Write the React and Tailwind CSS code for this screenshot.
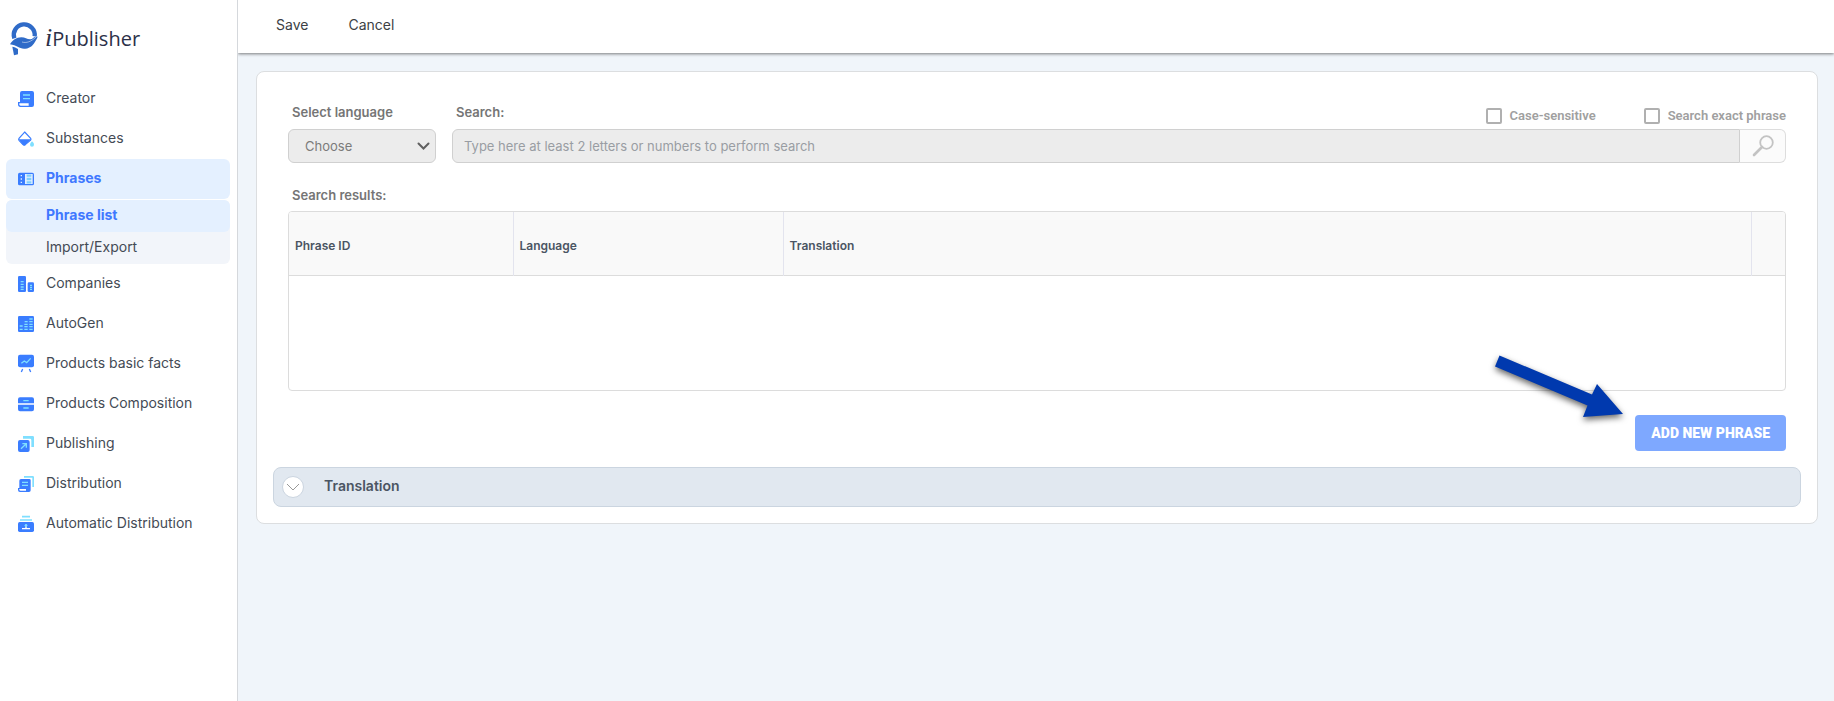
import React from 'react';

function Logo() {
  return (
    <svg width="28" height="35" viewBox="30 62 84 105" aria-hidden="true">
      <path d="M43 114A31.500 31.500 0 1 1 104 108" fill="none" stroke="#2f6bc8" strokeWidth="13" />
      <path
        d="M30 132C38 120 48 111 64 111C76 111 82 118 92 117C97 116 100 112 104 110L112 108C113 113 110 117 107 121C100 134 92 143 76 145C58 147 52 135 30 132Z"
        fill="#2f6bc8"
      />
      <path d="M66 125C78 129 94 125 110 108" fill="none" stroke="#fff" strokeWidth="1.5" />
      <path d="M37 139C43 140 48 142 54 146L54 162L42 165Z" fill="#2f6bc8" />
    </svg>
  );
}

function CreatorIcon() {
  return (
    <>
      <path d="M12 0H42Q48 0 48 6V42Q48 48 42 48H7Q0 48 0 40V33H6V6Q6 0 12 0Z" fill="#3a7dff" />
      <path d="M4 37H32V44H8Q4 44 4 40Z" fill="#fff" />
      <path d="M15 12H36M15 23H36" stroke="#7fdfff" strokeWidth="4" />
    </>
  );
}

function SubstancesIcon() {
  return (
    <>
      <path d="M20 3 L38 22 Q40 25 38 27 L22 41 Q18 44 15 41 L3 28 Q1 25 3 22 Z" fill="#fff" stroke="#3a7dff" strokeWidth="3.5" />
      <path d="M2 25H39L20 43H16Z" fill="#3a7dff" />
      <path d="M42 31Q49 37 48 41A6 6 0 0 1 36 41Q36 37 42 31Z" fill="#7fdfff" />
    </>
  );
}

function PhrasesIcon() {
  return (
    <>
      <rect x="0" y="5" width="48" height="38" rx="5" fill="#3a7dff" />
      <rect x="21" y="9" width="23" height="30" fill="#e4f0ff" />
      <path d="M8 14H12M8 24H12M8 34H12" stroke="#e4f0ff" strokeWidth="4" />
      <path d="M26 14H40M26 24H40M26 34H40" stroke="#7fcfff" strokeWidth="7" />
    </>
  );
}

function CompaniesIcon() {
  return (
    <>
      <rect x="0" y="0" width="24" height="48" rx="4" fill="#3a7dff" />
      <rect x="29" y="19" width="19" height="29" rx="4" fill="#3a7dff" />
      <path d="M8 17H17M8 25H17M8 33H17M8 40H17M36 28H42M36 34H42M36 40H42" stroke="#7fdfff" strokeWidth="4" />
    </>
  );
}

function AutoGenIcon() {
  return (
    <>
      <rect x="0" y="0" width="48" height="48" rx="4" fill="#3a7dff" />
      <path
        d="M5 40H14M19 40H29M34 40H44M5 30H14M19 32H29M34 32H44M19 25H29M34 25H44M20 17H29M34 17H44M34 9H44"
        stroke="#7fdfff"
        strokeWidth="4"
      />
    </>
  );
}

function BasicFactsIcon() {
  return (
    <>
      <rect x="0" y="-4" width="48" height="38" rx="6" fill="#3a7dff" />
      <path d="M10 22L19 15L26 20L38 7" fill="none" stroke="#7fdfff" strokeWidth="4" />
      <path d="M14 39L10 48M34 39L38 48" stroke="#3a7dff" strokeWidth="4" />
    </>
  );
}

function CompositionIcon() {
  return (
    <>
      <path d="M6 4H42Q48 4 48 10V22H0V10Q0 4 6 4ZM0 26H48V40Q48 46 42 46H6Q0 46 0 40Z" fill="#3a7dff" />
      <path d="M16 14H32M16 36H32" stroke="#7fdfff" strokeWidth="4" />
    </>
  );
}

function PublishingIcon() {
  return (
    <>
      <path d="M15 0H44Q48 0 48 4V33H40V12Q40 8 36 8H15Z" fill="#7fdfff" />
      <rect x="0" y="12" width="35" height="36" rx="6" fill="#3a7dff" />
      <path d="M9 38L24 24M13 23H25V35" fill="none" stroke="#7fdfff" strokeWidth="4" />
    </>
  );
}

function DistributionIcon() {
  return (
    <>
      <path d="M18 0H44Q48 0 48 4V33H43V5H18Z" fill="#7fdfff" />
      <path d="M9 9H34Q38 9 38 13V43Q38 48 33 48H6Q0 48 0 42V36H4V14Q4 9 9 9Z" fill="#3a7dff" />
      <path d="M4 39H24V44H8Q4 44 4 41Z" fill="#fff" />
      <path d="M12 19H30M12 28H30" stroke="#7fdfff" strokeWidth="4" />
    </>
  );
}

function AutoDistributionIcon() {
  return (
    <>
      <path d="M12 2H36M6 12H42" stroke="#7fdfff" strokeWidth="5" />
      <rect x="0" y="18" width="48" height="30" rx="5" fill="#3a7dff" />
      <path d="M12 38H36M24 31V38" stroke="#fff" strokeWidth="4" />
      <circle cx="24" cy="28" r="4" fill="#7fdfff" />
    </>
  );
}

const menuItems = [
  { label: 'Creator', icon: CreatorIcon },
  { label: 'Substances', icon: SubstancesIcon },
  {
    label: 'Phrases',
    icon: PhrasesIcon,
    active: true,
    children: [
      { label: 'Phrase list', active: true },
      { label: 'Import/Export' },
    ],
  },
  { label: 'Companies', icon: CompaniesIcon },
  { label: 'AutoGen', icon: AutoGenIcon },
  { label: 'Products basic facts', icon: BasicFactsIcon },
  { label: 'Products Composition', icon: CompositionIcon },
  { label: 'Publishing', icon: PublishingIcon },
  { label: 'Distribution', icon: DistributionIcon },
  { label: 'Automatic Distribution', icon: AutoDistributionIcon },
];

function Sidebar() {
  return (
    <aside className="relative z-10 w-[238px] shrink-0 border-r border-[#d5d8dc] bg-white">
      <div className="flex h-[79px] items-start gap-[7px] pt-[21px] pl-[10px]">
        <Logo />
        <span className="pt-0.5 font-['Open_Sans',sans-serif] text-xl leading-[30px] text-[#2b3048]">
          <em className="font-['Liberation_Serif',serif] text-[26px] leading-[30px]">i</em>Publisher
        </span>
      </div>

      <nav className="pr-[7px] pl-[6px]">
        {menuItems.map((item) => {
          const Icon = item.icon;
          return (
            <div key={item.label}>
              <a
                href="#"
                className={`flex h-10 items-center gap-3 rounded-md px-3 text-sm ${
                  item.active ? 'bg-[#e4f0ff] font-bold text-[#3f78ff]' : 'text-[#444b55]'
                }`}
              >
                <svg width="16" height="16" viewBox="0 0 48 48" overflow="visible" aria-hidden="true">
                  <Icon />
                </svg>
                <span className="pb-[3px]">{item.label}</span>
              </a>
              {item.children && (
                <div className="mt-px rounded-md bg-[#f2f5fa]">
                  {item.children.map((child) => (
                    <a
                      key={child.label}
                      href="#"
                      className={`flex h-8 items-center rounded-md pb-[3px] pl-10 text-sm ${
                        child.active ? 'bg-[#e4f0ff] font-bold text-[#3f78ff]' : 'text-[#444b55]'
                      }`}
                    >
                      {child.label}
                    </a>
                  ))}
                </div>
              )}
            </div>
          );
        })}
      </nav>
    </aside>
  );
}

function CheckField({ id, label }) {
  return (
    <div className="flex items-center gap-2">
      <input id={id} type="checkbox" className="size-4 appearance-none rounded-xs border-2 border-[#b0b0b0] bg-white" />
      <label htmlFor={id} className="font-[Roboto,sans-serif] text-[13px] leading-4 font-semibold text-[#a0a0a0]">
        {label}
      </label>
    </div>
  );
}

function SearchForm() {
  return (
    <div className="flex items-end gap-4">
      <div className="w-[148px]">
        <label htmlFor="language" className="block px-1 pb-[9px] text-[13px] leading-4 font-semibold text-[#757575]">
          Select language
        </label>
        <div className="relative">
          <select
            id="language"
            className="h-[34px] w-full appearance-none rounded-md border border-[#d0d0d0] bg-[#ececec] px-4 pt-0.5 text-[13px] text-[#7b7b7b]"
          >
            <option>Choose</option>
          </select>
          <svg className="pointer-events-none absolute top-3 right-[6px]" width="13" height="10" viewBox="0 0 13 10" fill="none">
            <path d="M1.5 2.5L6.5 7.5L11.5 2.5" stroke="#606060" strokeWidth="2" strokeLinecap="round" />
          </svg>
        </div>
      </div>

      <div className="flex-1">
        <div className="flex items-end justify-between">
          <label htmlFor="search" className="px-1 pb-[9px] text-[13px] leading-4 font-semibold text-[#757575]">
            Search:
          </label>
          <div className="flex gap-12 pb-[5px]">
            <CheckField id="case" label="Case-sensitive" />
            <CheckField id="exact" label="Search exact phrase" />
          </div>
        </div>
        <div className="flex h-[34px]">
          <input
            id="search"
            type="text"
            placeholder="Type here at least 2 letters or numbers to perform search"
            className="min-w-0 flex-1 rounded-l-md border border-[#d0d0d0] bg-[#ececec] px-[11px] pt-0.5 text-[13px] placeholder:text-[#999da3]"
          />
          <button
            type="button"
            aria-label="Search"
            className="flex w-[46px] items-center justify-center rounded-r-md border border-l-0 border-[#dddddd] bg-[#fbfbfb]"
          >
            <svg width="22" height="22" viewBox="0 0 22 22" fill="none" stroke="#c3c3c3">
              <circle cx="14.5" cy="7.5" r="6.3" strokeWidth="1.8" />
              <path d="M10 12L2 20" strokeWidth="2.6" strokeLinecap="round" />
            </svg>
          </button>
        </div>
      </div>
    </div>
  );
}

function ResultsTable() {
  return (
    <div className="h-[180px] overflow-hidden rounded-sm border border-[#dcdcdc]">
      <table className="w-full table-fixed border-collapse text-left text-xs text-[#4b5563]">
        <thead>
          <tr className="h-[63px] border-b border-[#dcdcdc] bg-[#f9f9f9]">
            <th className="w-[224px] border-r border-[#e3e4ee] px-[6px] pt-[6px] font-semibold">Phrase ID</th>
            <th className="w-[270px] border-r border-[#e3e4ee] px-[6px] pt-[6px] font-semibold">Language</th>
            <th className="border-r border-[#e3e4ee] px-[6px] pt-[6px] font-semibold">Translation</th>
            <th className="w-[34px]" />
          </tr>
        </thead>
      </table>
    </div>
  );
}

function PointerArrow() {
  return (
    <svg
      className="pointer-events-none absolute -top-[66px] right-full mr-1 drop-shadow-[0_3px_3px_rgba(0,0,0,0.6)]"
      width="144"
      height="80"
      viewBox="0 0 144 80"
      aria-hidden="true"
    >
      <path d="M12.5 6.5L105 45.5L110 35L136 65L96 68L100.5 56.5L8 17.5Z" fill="#0039ae" />
    </svg>
  );
}

export default function App() {
  return (
    <div className="flex min-h-screen bg-[#f0f5fa] font-[Inter,sans-serif]">
      <Sidebar />

      <div className="flex min-w-0 flex-1 flex-col">
        <header className="flex h-[53px] gap-10 bg-white px-[38px] pt-[15px] text-sm text-[#3c3f44] shadow-[0_1px_3px_rgba(0,0,0,0.5)]">
          <button type="button" className="h-5">Save</button>
          <button type="button" className="h-5">Cancel</button>
        </header>

        <main className="pt-[18px] pr-4 pl-[18px]">
          <section className="rounded-lg border border-[#dcdee0] bg-white px-4 pt-8 pb-4">
            <div className="px-[15px]">
              <SearchForm />

              <h2 className="px-1 pt-6 pb-2 text-[13px] leading-4 font-semibold text-[#757575]">Search results:</h2>
              <ResultsTable />

              <div className="flex justify-end pt-6 pb-4">
                <div className="relative">
                  <PointerArrow />
                  <button
                    type="button"
                    className="h-9 rounded-sm bg-[#7ea8ff] px-4 font-[Roboto,sans-serif] text-sm font-black text-white"
                  >
                    ADD NEW PHRASE
                  </button>
                </div>
              </div>
            </div>

            <button
              type="button"
              className="flex h-10 w-full items-center gap-5 rounded-lg border border-[#cbd5e0] bg-[#e1e8f0] px-2 text-sm font-semibold text-[#4b5563]"
            >
              <span className="flex size-[22px] items-center justify-center rounded-full border border-[#cbd5e0] bg-white">
                <svg width="14" height="8" viewBox="0 0 14 8" fill="none">
                  <path d="M1 1L7 7L13 1" stroke="#999" />
                </svg>
              </span>
              <span className="pb-[3px]">Translation</span>
            </button>
          </section>
        </main>
      </div>
    </div>
  );
}
